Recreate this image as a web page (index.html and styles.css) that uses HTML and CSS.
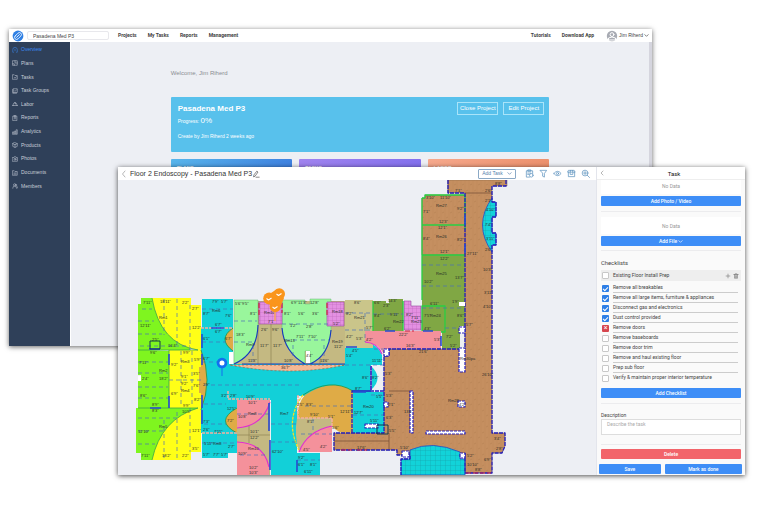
FILE: index.html
```html
<!DOCTYPE html>
<html lang="en">
<head>
<meta charset="utf-8">
<title>Pasadena Med P3</title>
<link rel="stylesheet" href="styles.css">
</head>
<body>
<div class="desktop">
<section class="window dashboard">
  <header class="topbar">
    <svg class="logo" viewBox="0 0 12 12" aria-hidden="true"><circle cx="6" cy="6" r="5.4" fill="#2f80e4"/><g transform="rotate(-45 6 6)" fill="none" stroke="#fff" stroke-width=".8"><rect x="2" y="4" width="8" height="4" rx="2"/><path d="M4 6h4"/></g></svg>
    <input class="project-input" aria-label="Project" value="Pasadena Med P3">
    <nav class="topnav"><a href="#">Projects</a><a href="#">My Tasks</a><a href="#">Reports</a><a href="#">Management</a></nav>
    <nav class="topnav account"><a href="#">Tutorials</a><a href="#">Download App</a></nav>
    <button class="user"><svg viewBox="0 0 12 12" aria-hidden="true"><circle cx="6" cy="6" r="5.2" fill="#a8abb3"/><circle cx="6" cy="4.6" r="1.9" fill="none" stroke="#fff"/><path d="M2.500 9.600V8q3.500-2 7 0v1.600z" fill="none" stroke="#fff"/></svg>Jim Riherd<svg class="chev" viewBox="0 0 6 6" aria-hidden="true"><path d="M1 2l2 2 2-2"/></svg></button>
  </header>
  <div class="dash-body">
    <nav class="sidebar">
      <a class="active" href="#"><svg viewBox="0 0 8 8"><path d="M2 7H1V3.500a3 3 0 0 1 6 0V7H6M4 3v2"/></svg>Overview</a>
      <a href="#"><svg viewBox="0 0 8 8"><path d="M1 1h6v6H1zM1 5h2v2M4 1v3h3"/></svg>Plans</a>
      <a href="#"><svg viewBox="0 0 8 8"><path d="M1 1h2l1 1h3v5H1zM3 4.500l1 1 2-2"/></svg>Tasks</a>
      <a href="#"><svg viewBox="0 0 8 8"><path d="M2 1h5v5H2zM1 2v5h5M3 3.500l1 1 2-2"/></svg>Task Groups</a>
      <a href="#"><svg viewBox="0 0 8 8"><path d="M.5 6h7M1.500 6V5a2.500 2.500 0 0 1 5 0v1M3.500 2h1v2"/></svg>Labor</a>
      <a href="#"><svg viewBox="0 0 8 8"><path d="M1.500 1.500h5v6h-5zM3 .8h2v1H3zM3 3.500h2M3 5h2"/></svg>Reports</a>
      <a href="#"><svg viewBox="0 0 8 8"><path d="M1 4h1.500v3H1zM3.500 3H5v4H3.500zM6 1h1v6H6z"/></svg>Analytics</a>
      <a href="#"><svg viewBox="0 0 8 8"><path d="M4 .8l3 1.400v3.600L4 7.200 1 5.800V2.200zM1 2.200l3 1.400 3-1.400M4 3.600v3.600"/></svg>Products</a>
      <a href="#"><svg viewBox="0 0 8 8"><path d="M.8 2h1.700l.5-1h2l.5 1h1.700v5H.8z"/><circle cx="4" cy="4.300" r="1.300"/></svg>Photos</a>
      <a href="#"><svg viewBox="0 0 8 8"><path d="M1 1h2l1 1h3v5H1zM2.500 4h3M2.500 5.500h3"/></svg>Documents</a>
      <a href="#"><svg viewBox="0 0 8 8"><circle cx="3.500" cy="2.500" r="1.500"/><path d="M1 7q0-3 2.500-3T6 7M5.500 1.500q1.500.5.5 2.500 1.300.7 1.300 2.500"/></svg>Members</a>
    </nav>
    <main class="dash-main">
      <p class="welcome">Welcome, Jim Riherd</p>
      <div class="project-card">
        <div><h1>Pasadena Med P3</h1><p>Progress: <b>0%</b></p><p class="created">Create by Jim Riherd 2 weeks ago</p></div>
        <div class="card-actions"><button>Close Project</button><button>Edit Project</button></div>
      </div>
      <div class="tiles"><div class="tile blue">PLANS</div><div class="tile violet">TASKS</div><div class="tile coral">LABOR</div></div>
    </main>
  </div>
</section>

<section class="window planner">
  <div class="plan-side">
    <header class="plan-bar">
      <button class="back" aria-label="Back"><svg viewBox="0 0 6 8"><path d="M4 1L1.500 4 4 7"/></svg></button>
      <h2>Floor 2 Endoscopy - Pasadena Med P3</h2>
      <button class="tool edit" aria-label="Rename"><svg viewBox="0 0 10 10"><path d="M2 8l.5-2L6 1.500l1.500 1L4 7.500zM5 9h4"/></svg></button>
      <button class="add-task">Add Task <svg class="chev" viewBox="0 0 6 6"><path d="M1 2l2 2 2-2"/></svg></button>
      <div class="tools">
        <button class="tool" aria-label="Tasks"><svg viewBox="0 0 10 10"><path d="M5 9H1.500V2h7v3M3.500 1h3v1.500h-3zM3 4.500h3.500M3 6h1.500"/><circle cx="7" cy="7" r="2"/></svg></button>
        <button class="tool" aria-label="Filter"><svg viewBox="0 0 10 10"><path d="M1.500 1.500h7L6 5v4L4 8V5z"/></svg></button>
        <button class="tool" aria-label="View"><svg viewBox="0 0 10 10"><path d="M1 5q4-5 8 0-4 5-8 0z"/><circle cx="5" cy="5" r="1.200"/></svg></button>
        <button class="tool" aria-label="Products"><svg viewBox="0 0 10 10"><path d="M2 1.500h6l1 2H1zM1.500 3.500v5h7v-5M4 1.500l-.5 2V6h3V3.500L6 1.500"/></svg></button>
        <button class="tool" aria-label="Zoom"><svg viewBox="0 0 10 10"><circle cx="4.500" cy="4.500" r="3.200"/><path d="M7 7l2.500 2.500M2.800 4.500h3.400M4.500 2.800v3.400"/></svg></button>
      </div>
    </header>
    <svg class="plan" viewBox="118 180 478 295" role="img" aria-label="Floor plan">
      <defs>
        <pattern id="wood" width="8" height="11" patternUnits="userSpaceOnUse"><rect width="8" height="11" fill="#c58f60"/><path d="M1 0v11M5 0v11" stroke="#bd8656" stroke-width=".5"/><path d="M2 4l2-1M6 9l2-1" stroke="#b17c4e" stroke-width=".5"/></pattern>
        <pattern id="tile" width="5" height="5" patternUnits="userSpaceOnUse"><rect width="5" height="5" fill="#12d3d9"/><path d="M0 0h5M0 0v5" stroke="#159ca8" stroke-width=".6"/></pattern>
        <pattern id="mauve" width="4" height="4" patternUnits="userSpaceOnUse"><rect width="4" height="4" fill="#e490e2"/><path d="M0 0h4M0 0v4" stroke="#b35fb3" stroke-width=".5"/></pattern>
      </defs>
      <g class="wood">
        <path d="M448 180H507V186H492V433H505V446L502 453H492V473H465V453H459Q435 440 410 450V455H397V450H334V433H384V349H465V193H448Z"/>
        <path d="M425 195H465V255H422V198H425Z"/>
      </g>
      <g class="cyan">
        <path d="M202 299H233V364H371V392H384V433H353V396H297V475H271V400H237V453H228V458H202V433H201V328H202Z"/>
        <path d="M345 347H365V342Q378 344 382 355V365H371V366H345Z"/>
        <path d="M371 366Q384 378 371 390Z"/>
        <path d="M297 453H320V475H297Z"/>
      </g>
      <g fill="url(#tile)" stroke="#254ac4" stroke-width=".8">
        <path d="M401 475V459H410V450Q432 440 460 452V459H465V475Z"/>
        <path d="M492 198Q473 225 492 252V245H496V233H492V217H496V202H492Z"/>
      </g>
      <g class="lime">
        <path d="M141 298H190V350H148L170 351V408H200L153 460H141V453H136V408H138V381H141V375H138V304H141Z"/>
      </g>
      <g class="yellow">
        <path d="M152 298H191V305H201V350H198Q160 344 152 298ZM169 350H201V408H169ZM198 408H201V452H191V460H152Q161 419 198 408Z"/>
      </g>
      <g fill="none" stroke="#3ba34a" stroke-width=".8"><path d="M152 298Q160 344 198 350H138M198 408Q161 419 152 460M138 408H198M169 350V408"/></g>
      <g class="khaki">
        <path d="M234 301H373V348H345V364H234Z"/>
        <path d="M345 300H373V348H345Z" fill="#cac58a"/>
        <path d="M237 400H270V475H237Z"/>
        <path d="M297 418H332V426Q307 431 299 452Q294 435 297 418Z"/>
      </g>
      <path d="M258 301V364M271 324V364M320 324V364M237 435H270M249 426V443" stroke="#8f8554" fill="none" stroke-width=".7"/>
      <g class="mint"><path d="M234 300H258V325Q257 354 234 364ZM282 300H305V304H310V299H331V330Q329 356 310 364V351H305V364Q284 352 282 328Z"/></g>
      <g fill="none" stroke="#1637c2" stroke-width="1.100"><path d="M258 325Q257 354 234 364M282 328Q284 352 305 364M331 330Q329 356 310 364M242 364H345" /></g>
      <g fill="url(#mauve)" stroke="#9344a0" stroke-width=".6"><path d="M259 302H282V324H259ZM327 302H344V326H327ZM404 301H411V306H421V330H404Z"/></g>
      <g class="moss"><path d="M373 301H386V303H389V299H403V331H373ZM422 255H465V302H459V306H465V326H460V349H442V332H422Z"/></g>
      <g fill="none" stroke="#28cf43" stroke-width="1.300"><path d="M422 306H445V332H422ZM422 198H425V195H465M422 198V255H465M422 225H465M422 255V300M373 301V331M403 301V331M465 195V230"/></g>
      <g class="pink">
        <path d="M365 331H441V349H389L384 354Q378 343 365 342Z"/>
        <path d="M237 400H270Q263 426 237 428ZM237 442Q264 443 269 467V475H237Z"/>
        <path d="M332 426V452H299Q307 431 332 426Z"/>
      </g>
      <g fill="none" stroke="#e02dd0" stroke-width="1.100"><path d="M270 402Q263 426 237 428M237 442Q264 443 269 467M299 452Q307 431 332 426M365 342Q378 343 382 354M371 366V390"/></g>
      <g class="amber">
        <path d="M305 395Q332 377 353 391V433H342Q335 430 332 426V418H297Q298 402 305 395Z"/>
        <path d="M233 328Q217 339 233 351ZM237 408Q214 421 237 433ZM201 350Q213 380 201 410V393H199V367H201Z"/>
      </g>
      <path d="M303 395Q330 377 353 391M233 328Q217 339 233 351M237 408Q214 421 237 433M201 350Q213 380 201 410" fill="none" stroke="#199447" stroke-width=".8"/>
      <path d="M303 395Q284 420 299 450" fill="none" stroke="#f2df26" stroke-width="1.300" stroke-dasharray="3 1"/>
      <path d="M230 365H345Q290 377 230 365Z" fill="#f4b894" stroke="#a35b42" stroke-width=".7" stroke-dasharray="2 2"/>
      <path d="M228 391V399H270M297 418H332V426M298 395V418M202 433H237M201 328H233" fill="none" stroke="#f4b0a0" stroke-width="1.500" stroke-dasharray="3 1"/>
      <g class="dash"><path d="M142 309H152M138 321H154M138 334H162M140 346H190M138 362H168M138 373H168M138 387H168M138 398H168M138 418H178M138 431H164M138 444H155M164 299V335M177 299V346M190 305V350M164 420V458M177 412V458M190 408V452M181 351V407M192 351V407M169 380H201M202 309H233M202 342H226M202 362H220M204 385H300M204 404H226M204 424H226M202 443H235M234 321H257M234 342H252M282 324H330M286 340H329M253 345V362M293 345V358M324 345V362M345 313H373M345 330H373M373 314H403M422 265H465M422 286H465M422 308H465M445 328H460M365 313V342M374 349H440M345 365H384M371 395H384M353 415H384M305 406H353M271 424H297M271 442H297M237 414H270M301 434H332M240 455H268M297 460H320M313 419V430"/></g>
      <g class="room-line"><path d="M389 391H410V433M389 433V450M448 180V193M465 193H492M334 441H389"/></g>
      <g class="wall"><path d="M448 180V193H465V349H389V356H384V433H334V450H397V455H410V459H401V475M506 180V186H492V202H496V217H492V233H496V245H492V433H505V446L502 453H492V473H465V453M352 391H371V366M384 391H352V433"/></g>
      <g class="blue-bar"><path d="M202 334V348M202 354V365M202 395V408M202 410V424M169 354V365M169 396V408M149 349H160M150 408H161M211 328H224M269 403V431M270 440V470M346 347H357M353 392H366M385 331H395M423 331H433M441 336V346M297 460V472M465 215V225M465 244V253"/></g>
      <path d="M259 303V315M282 303V313M327 303V315M405 331H414M341 450H352M357 450H367M466 473H491" stroke="#ce1f44" stroke-width="1.200" stroke-dasharray="5 2" fill="none"/>
      <g class="void"><path d="M384 349H389V356H384ZM410 391H413V433H410ZM426 431H465V434H426ZM459 348H465V372H459ZM458 401H465V407H458ZM459 327H465V333H459ZM384 402H388V407H384ZM365 424H378V428H365ZM460 453H465V458H460ZM402 451H409V457H402Z"/></g>
      <path d="M229 352H233V364H229ZM306 351H310V363H306ZM459 302H465V306H459ZM138 376H141V381H138Z" fill="#fff"/>
      <path d="M150 341H160V349H150ZM377 425H388V434H377Z" fill="none" stroke="#15394e" stroke-width="1"/>
      <g class="labels">
        <text x="143" y="304">7'11"</text><text x="160" y="303">18'11"</text><text x="182" y="304">2'2"</text><text x="192" y="310">2'7"</text><text x="159" y="319">Rm1</text><text x="140" y="327">12'11"</text><text x="192" y="329">12'2"</text><text x="152" y="341">2'5"</text><text x="168" y="347">16'4"</text><text x="150" y="354">9'6"</text><text x="183" y="354">9'9"</text><text x="139" y="364">7'11"</text><text x="181" y="363">Rm3</text><text x="171" y="366">9'2"</text><text x="194" y="361">5'9"</text><text x="159" y="372">Rm2</text><text x="142" y="380">2'4"</text><text x="159" y="380">18'2"</text><text x="181" y="378">9'1"</text><text x="181" y="385">9'2"</text><text x="193" y="375">3'5"</text><text x="193" y="387">7'6"</text><text x="181" y="392">Rm4</text><text x="140" y="397">8'6"</text><text x="171" y="395">6'9"</text><text x="194" y="401">8'2"</text><text x="152" y="406">8'9"</text><text x="183" y="407">9'9"</text><text x="152" y="412">8'3"</text><text x="182" y="413">10'5"</text><text x="159" y="428">Rm5</text><text x="138" y="433">12'10"</text><text x="192" y="432">12'1"</text><text x="192" y="450">3'5"</text><text x="141" y="457">7'11"</text><text x="162" y="457">18'2"</text><text x="182" y="457">2'2"</text>
        <text x="212" y="303">7'9"</text><text x="221" y="303">5'7"</text><text x="212" y="312">Rm6</text><text x="203" y="315">8'7"</text><text x="225" y="317">7'6"</text><text x="215" y="326">6'7"</text><text x="215" y="333">6'7"</text><text x="203" y="340">6'1"</text><text x="225" y="340">6'7"</text><text x="203" y="360">6'7"</text><text x="203" y="386">2'9"</text><text x="221" y="397">3'2"</text><text x="230" y="397">2'8"</text><text x="227" y="410">12'5"</text><text x="227" y="422">7'2"</text><text x="203" y="423">7'3"</text><text x="203" y="431">2'6"</text><text x="214" y="433">7'11"</text><text x="204" y="445">5'11"</text><text x="213" y="445">Rm8</text><text x="228" y="448">2'7"</text><text x="203" y="456">5'7"</text><text x="213" y="456">7'7"</text><text x="221" y="456">5'7"</text>
        <text x="235" y="305">5'6"</text><text x="242" y="305">9'5"</text><text x="236" y="336">18'3"</text><text x="246" y="346">Rm9</text><text x="250" y="315">8'1"</text><text x="261" y="331">2'6"</text><text x="272" y="331">9'6"</text><text x="260" y="347">11'7"</text><text x="273" y="347">11'7"</text><text x="248" y="362">11'3"</text><text x="264" y="314">Rm10</text><text x="268" y="323">7'1"</text><text x="284" y="315">8'1"</text><text x="291" y="304">6'9"</text><text x="298" y="304">11'3"</text><text x="310" y="304">12'8"</text><text x="298" y="315">5'6"</text><text x="312" y="315">3'6"</text><text x="290" y="327">1'2"</text><text x="306" y="328">2'8"</text><text x="284" y="342">Rm13</text><text x="296" y="338">7'11"</text><text x="308" y="338">7'10"</text><text x="306" y="357">4'4"</text><text x="284" y="362">10'8"</text><text x="320" y="362">11'6"</text><text x="332" y="313">Rm18</text><text x="333" y="325">5'2"</text><text x="332" y="343">Rm19</text><text x="334" y="348">11'2"</text><text x="281" y="369">36'7"</text>
        <text x="346" y="315">8'2"</text><text x="354" y="304">8'6"</text><text x="354" y="319">Rm21</text><text x="346" y="338">4'2"</text><text x="356" y="340">5'3"</text><text x="366" y="329">5'7"</text><text x="346" y="357">5'4"</text><text x="352" y="352">4'5"</text><text x="366" y="341">4'2"</text><text x="372" y="362">11'11"</text><text x="374" y="304">6'6"</text><text x="383" y="307">2'3"</text><text x="388" y="302">14'3"</text><text x="374" y="317">8'4"</text><text x="390" y="316">9'11"</text><text x="393" y="323">Rm22</text><text x="384" y="330">6'2"</text><text x="406" y="316">8'2"</text><text x="411" y="323">Rm23</text><text x="411" y="319">7'11"</text><text x="399" y="336">22'2"</text><text x="406" y="347">16'3"</text><text x="419" y="353">21'6"</text><text x="434" y="341">5'3"</text>
        <text x="426" y="199">3'10"</text><text x="440" y="199">11'10"</text><text x="436" y="207">Rm27</text><text x="423" y="213">7'1"</text><text x="457" y="210">9'2"</text><text x="439" y="223">12'3"</text><text x="438" y="229">12'1"</text><text x="436" y="238">Rm26</text><text x="423" y="240">8'4"</text><text x="457" y="241">8'2"</text><text x="440" y="253">12'1"</text><text x="440" y="260">12'2"</text><text x="436" y="275">Rm25</text><text x="424" y="283">10'2"</text><text x="455" y="279">13'7"</text><text x="430" y="305">6'11"</text><text x="452" y="303">1'9"</text><text x="430" y="317">Rm24</text><text x="424" y="317">7'5"</text><text x="424" y="330">4'3"</text><text x="457" y="317">8'6"</text><text x="446" y="338">7'2"</text><text x="450" y="347">5'2"</text><text x="455" y="192">7'1"</text><text x="485" y="192">2'6"</text><text x="495" y="185">8'8"</text><text x="485" y="202">2'1"</text><text x="486" y="211">4'10"</text><text x="485" y="226">7'4"</text><text x="486" y="240">3'11"</text><text x="485" y="251">2'6"</text><text x="467" y="255">27'11"</text><text x="483" y="271">10'3"</text><text x="484" y="294">3'11"</text><text x="483" y="308">4'10"</text><text x="466" y="326">5'7"</text><text x="460" y="360">Rm30pa</text><text x="482" y="376">26'10"</text>
        <text x="385" y="375">5'3"</text><text x="362" y="379">8'6"</text><text x="372" y="379">8'2"</text><text x="355" y="390">8'7"</text><text x="376" y="398">5'5"</text><text x="386" y="397">5'3"</text><text x="363" y="408">Rm20</text><text x="354" y="414">12'7"</text><text x="370" y="422">5'11"</text><text x="388" y="406">2'1"</text><text x="386" y="419">6'3"</text><text x="404" y="413">13'6"</text><text x="448" y="402">Rm28</text><text x="459" y="406">4'2"</text><text x="389" y="432">5'5"</text><text x="357" y="449">17'6"</text><text x="400" y="449">5'10"</text><text x="467" y="457">5'2"</text><text x="467" y="466">10'10"</text><text x="475" y="471">8'8"</text><text x="484" y="461">6'9"</text><text x="494" y="440">3'4"</text><text x="496" y="450">2'8"</text>
        <text x="248" y="404">10'1"</text><text x="248" y="415">Rm8</text><text x="238" y="418">10'8"</text><text x="250" y="433">10'1"</text><text x="250" y="439">12'2"</text><text x="248" y="450">Rm10</text><text x="238" y="455">10'9"</text><text x="249" y="469">10'2"</text><text x="249" y="474">10'3"</text><text x="280" y="415">Rm7</text><text x="272" y="453">62'10"</text><text x="297" y="406">2'5"</text><text x="306" y="406">8'3"</text><text x="340" y="413">12'11"</text><text x="328" y="418">5'1"</text><text x="310" y="416">9'10"</text><text x="307" y="423">8'1"</text><text x="332" y="429">5'6"</text><text x="320" y="448">4'2"</text><text x="303" y="451">4'5"</text><text x="298" y="459">9'2"</text><text x="298" y="466">6'1"</text><text x="310" y="466">8'1"</text><text x="304" y="473">6'11"</text><text x="246" y="398">10'9"</text>
      </g>
      <g fill="#fa951c"><path d="M275 310V321" stroke="#f6a35a" stroke-width="1.500"/><circle cx="279.300" cy="294" r="5.700"/><circle cx="269.200" cy="298.500" r="6"/><circle cx="275.200" cy="306.500" r="5.600"/><path d="M271 293L277 289L284 298L280 308L269 304Z"/><path d="M266.500 298.500l2 1.500 3-2M276.500 294l2 1.500 3-2M272.500 307l2 1.500 3-2" fill="none" stroke="#fff" stroke-width="1.100"/></g>
      <path d="M222 368V376" stroke="#126ff0" stroke-width="1"/><circle cx="222" cy="363" r="3.900" fill="#fff" stroke="#126ff0" stroke-width="2.800"/>
    </svg>
  </div>
  <aside class="task">
    <header class="task-bar"><button class="back" aria-label="Close task"><svg viewBox="0 0 6 8"><path d="M4 2L2 4 4 6"/></svg></button><h2>Task</h2></header>
    <div class="task-body">
      <section class="block media"><p class="empty first">No Data</p><button class="primary">Add Photo / Video</button></section>
      <section class="block files"><p class="empty">No Data</p><button class="primary">Add File <svg class="chev" viewBox="0 0 6 6"><path d="M1 2l2 2 2-2"/></svg></button></section>
      <section class="block checks">
        <h3>Checklists</h3>
        <div class="check-head"><input type="checkbox" id="c0"><label for="c0">Existing Floor Install Prep</label><button aria-label="Add item"><svg viewBox="0 0 8 8"><path d="M1.500 4h5M4 1.500v5"/></svg></button><button aria-label="Delete checklist"><svg viewBox="0 0 8 8"><path d="M1 2h6M3 2V1h2v1M2 2v5h4V2M3.300 3.500v2.500M4.700 3.500v2.500"/></svg></button></div>
        <ul>
          <li><input type="checkbox" id="c1" checked><label for="c1">Remove all breakables</label></li>
          <li><input type="checkbox" id="c2" checked><label for="c2">Remove all large items, furniture &amp; appliances</label></li>
          <li><input type="checkbox" id="c3" checked><label for="c3">Disconnect gas and electronics</label></li>
          <li><input type="checkbox" id="c4" checked><label for="c4">Dust control provided</label></li>
          <li><input class="rejected" type="checkbox" id="c5"><label for="c5">Remove doors</label></li>
          <li><input type="checkbox" id="c6"><label for="c6">Remove baseboards</label></li>
          <li><input type="checkbox" id="c7"><label for="c7">Remove door trim</label></li>
          <li><input type="checkbox" id="c8"><label for="c8">Remove and haul existing floor</label></li>
          <li><input type="checkbox" id="c9"><label for="c9">Prep sub floor</label></li>
          <li><input type="checkbox" id="c10"><label for="c10">Verify &amp; maintain proper interior temperature</label></li>
        </ul>
        <button class="primary">Add Checklist</button>
      </section>
      <section class="block desc"><label for="desc">Description</label><textarea id="desc" placeholder="Describe the task"></textarea></section>
      <button class="primary danger">Delete</button>
    </div>
    <footer class="task-foot"><button class="primary">Save</button><button class="primary">Mark as done</button></footer>
  </aside>
</section>
</div>
</body>
</html>
```
FILE: styles.css
```css
* { box-sizing: border-box; }
body { margin: 0; background: #fff; font: 5px/7px "Liberation Sans", Arial, sans-serif; color: #444; }
h1, h2, h3, p, ul { margin: 0; padding: 0; font-weight: 400; list-style: none; }
a { color: inherit; text-decoration: none; }
button, input, textarea { font: inherit; color: inherit; margin: 0; padding: 0; border: 0; background: none; }
svg { fill: none; stroke-linecap: round; stroke-linejoin: round; }
.desktop { position: relative; min-height: 100vh; overflow: hidden; }
.window { position: absolute; display: flex; background: #edeff4; }
.dashboard { inset: 29px 108px 159px 9px; flex-direction: column; box-shadow: 0 1px 5px rgba(0,0,0,.6); }
.planner { inset: 167px 15px 30px 118px; box-shadow: 0 1px 5px rgba(0,0,0,.7); }

.topbar { display: flex; align-items: center; flex: 0 0 13px; padding: 0 3px; background: #fff; }
.logo { width: 12px; height: 12px; }
.project-input { width: 82px; height: 9px; margin: 0 9px 0 3px; padding: 0 5px; border: 1px solid #e8e8ec; border-radius: 2px; }
.topnav { display: flex; gap: 11px; font-family: Roboto, "Liberation Sans", sans-serif; font-weight: 700; color: #444; }
.account { margin-left: auto; }
.user { display: flex; align-items: center; gap: 1px; margin-left: 12px; }
.user svg { width: 12px; height: 12px; }
.chev, .user .chev { width: 5px; height: 5px; stroke: currentColor; stroke-width: .8; }
.dash-body { display: flex; flex: 1; min-height: 0; }
.sidebar { display: grid; grid-template-rows: repeat(11, 1fr); flex: 0 0 61px; height: 100%; padding: 1px 0 153px 3px; background: #2f4059; color: #c8ced8; }
.sidebar a { display: flex; align-items: center; gap: 3px; }
.sidebar svg { width: 6px; height: 6px; stroke: currentColor; stroke-width: .7; }
.sidebar .active { color: #3b8cf5; }
.dash-main { flex: 1; display: flex; flex-direction: column; align-items: center; padding-top: 26px; border-left: 1px solid #fff; border-right: 3px solid #d5d5de; }
.dash-main > * { width: 65.5%; }
.welcome { font-size: 6px; line-height: 10px; color: #8a8d93; }
.project-card { display: flex; justify-content: space-between; height: 55px; margin: 19px 0 7px; padding: 5px 5px 5px 7px; border-radius: 1px; background: #58c1ec; color: #fff; }
.project-card h1 { font-size: 8px; line-height: 13px; font-weight: 700; }
.project-card p { line-height: 12px; }
.project-card b { font-size: 8px; font-weight: 400; }
.project-card .created { margin-top: 3px; }
.card-actions { display: flex; gap: 5px; }
.card-actions button { width: 41px; height: 13px; border: 1px solid #a9e4f9; font-size: 6px; }
.tiles { display: flex; gap: 7px; }
.tile { flex: 1; height: 50px; padding: 6px; border-radius: 1px; color: #fff; font-weight: 700; }
.blue { background: linear-gradient(135deg, #58b6eb, #356edc); }
.violet { background: linear-gradient(135deg, #a184ef, #7869ed); }
.coral { background: linear-gradient(135deg, #f6a98d, #e98760); }

.plan-side { flex: 1; min-width: 0; display: flex; flex-direction: column; }
.plan-bar { display: flex; align-items: center; flex: 0 0 13px; padding: 0 6px 0 3px; background: #fff; }
.plan-bar h2 { font-size: 7px; line-height: 13px; color: #333; margin-left: 3px; white-space: nowrap; }
.back { display: flex; }
.back svg { width: 6px; height: 8px; stroke: #888; stroke-width: .6; }
.tool { display: flex; }
.tool svg { width: 9px; height: 9px; stroke: #5a91bd; stroke-width: .8; }
.edit svg { width: 8px; height: 8px; stroke: #444; }
.add-task { display: flex; align-items: center; justify-content: center; gap: 4px; width: 38px; height: 10px; margin: 0 9px 0 auto; border: 1px solid #8ba9c6; border-radius: 1px; color: #557fae; }
.tools { display: flex; gap: 5px; }
.plan { flex: 1; width: 100%; min-height: 0; stroke-linecap: butt; }
.wood { fill: url(#wood); stroke: #7d6047; stroke-width: .5; }
.cyan { fill: #12d0d8; }
.lime { fill: #7ff51f; }
.yellow { fill: #ffff17; }
.khaki { fill: #c4b982; }
.mint { fill: #99f69c; stroke: #6ab578; stroke-width: .5; }
.moss { fill: #80a744; }
.pink { fill: #f4919b; }
.amber { fill: #dfab46; }
.dash { stroke: #4c70b8; stroke-width: .7; stroke-dasharray: 4 3; }
.room-line { stroke: #714a33; stroke-width: .7; }
.wall { stroke: #2520bd; stroke-width: 1.3; stroke-dasharray: 4 1; }
.void { fill: #fff; stroke: #2921b9; stroke-width: 1.2; stroke-dasharray: 3 1; }
.blue-bar { stroke: #2949d2; stroke-width: 1.6; }
.labels { fill: #272b27; font: 4px "Liberation Sans", Arial, sans-serif; }

.task { display: flex; flex-direction: column; flex: 0 0 149px; border-left: 1px solid #e3e5ec; background: #fafafa; font-family: Roboto, "Liberation Sans", sans-serif; }
.task-bar { display: flex; align-items: center; flex: 0 0 13px; padding-left: 2px; background: #fff; border-bottom: 1px solid #eee; }
.task-bar h2 { flex: 1; padding-right: 2px; text-align: center; font-size: 6px; color: #111; }
.task-body { flex: 1; padding: 0 4px; }
.block { border-bottom: 1px solid #ececee; }
.empty { padding: 6px 0 4px; margin-bottom: 2px; background: #fff; text-align: center; color: #999; }
.empty.first { padding-top: 3px; }
.primary { display: flex; align-items: center; justify-content: center; width: 100%; height: 10px; gap: 1px; border-radius: 1px; background: #3e8ef7; color: #fff; font-weight: 500; }
.media { padding-bottom: 5px; margin-bottom: 5px; }
.files { padding-bottom: 4px; margin-bottom: 9px; }
.checks { padding-bottom: 5px; }
.checks h3 { line-height: 7px; margin-bottom: 3px; }
.check-head { display: flex; align-items: center; height: 11px; padding: 0 2px 0 1px; background: #eee; margin-bottom: 2px; }
.check-head label { flex: 1; }
.check-head svg { display: block; width: 6px; height: 6px; margin-left: 2px; stroke: #777; stroke-width: .8; }
input[type="checkbox"] { appearance: none; width: 7px; height: 7px; margin-right: 4px; border: 1px solid #c8c8c8; border-radius: 1px; background: #fff; }
input[type="checkbox"]:checked, input.rejected { display: grid; place-items: center; border: 0; background: #2e7fe6; }
input[type="checkbox"]:checked::after { content: ""; width: 4px; height: 2px; border: solid #fff; border-width: 0 0 1px 1px; transform: rotate(-45deg); }
input[type="checkbox"].rejected { border: 0; background: #d6464f; }
input.rejected::after { content: "×"; color: #fff; font-size: 7px; line-height: 7px; }
.checks ul { margin-bottom: 5px; }
.checks li { display: flex; align-items: center; height: 10px; padding: 0 3px 0 1px; }
.checks li label { flex: 1; line-height: 9px; border-bottom: 1px solid #ccc; white-space: nowrap; }
.checks li:last-child label { border-bottom-color: transparent; }
.desc { padding: 7px 0 9px; margin-bottom: 4px; }
.desc label { display: block; line-height: 8px; }
.desc textarea { display: block; width: 100%; height: 16px; padding: 1px 5px; border: 1px solid #ddd; background: #fff; resize: none; }
.desc textarea::placeholder { color: #aaa; }
.danger { background: #f2646a; }
.task-foot { display: flex; gap: 4px; padding: 0 3px 1px 2px; }
.task-foot .primary:first-child { flex: 4; }
.task-foot .primary:last-child { flex: 5; }
```
